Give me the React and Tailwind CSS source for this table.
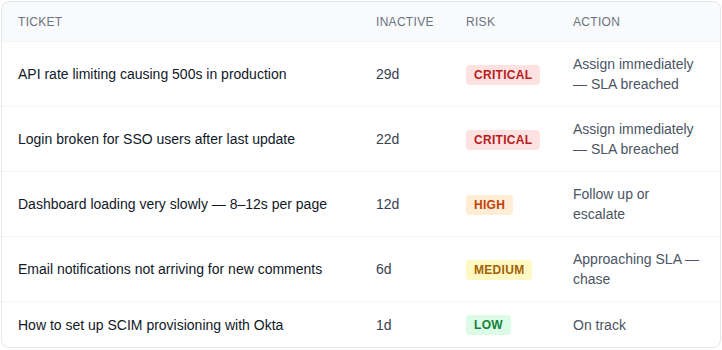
import React from "react";

const rows = [
  { t: "API rate limiting causing 500s in production", d: "29d", r: "CRITICAL", a: "Assign immediately — SLA breached" },
  { t: "Login broken for SSO users after last update", d: "22d", r: "CRITICAL", a: "Assign immediately — SLA breached" },
  { t: "Dashboard loading very slowly — 8–12s per page", d: "12d", r: "HIGH", a: "Follow up or escalate" },
  { t: "Email notifications not arriving for new comments", d: "6d", r: "MEDIUM", a: "Approaching SLA — chase" },
  { t: "How to set up SCIM provisioning with Okta", d: "1d", r: "LOW", a: "On track" },
];

const badge = {
  CRITICAL: "bg-[#fee2e2] text-[#b91c1c]",
  HIGH: "bg-[#ffedd5] text-[#c2410c]",
  MEDIUM: "bg-[#fef9c3] text-[#a16207]",
  LOW: "bg-[#dcfce7] text-[#15803d]",
};

export default function App() {
  return (
    <div className="p-px bg-white" style={{ fontFamily: '"Liberation Sans", Arial, sans-serif' }}>
      <div className="w-[720px] border border-[#e5e7eb] rounded-lg overflow-hidden bg-white">
        <table className="w-full table-fixed border-collapse text-sm">
          <colgroup>
            <col className="w-[358px]" />
            <col className="w-[90px]" />
            <col className="w-[107px]" />
            <col />
          </colgroup>
          <thead>
            <tr className="bg-[#f9fafb] border-b border-[#f3f4f6]">
              {["TICKET", "INACTIVE", "RISK", "ACTION"].map((h) => (
                <th key={h} className="px-4 pt-3 pb-[11px] text-left text-xs leading-4 font-normal tracking-wide text-[#6b7280]">
                  {h}
                </th>
              ))}
            </tr>
          </thead>
          <tbody>
            {rows.map((row, i) => (
              <tr key={i} className={i < rows.length - 1 ? "border-b border-[#f3f4f6]" : ""}>
                <td className="px-4 py-3 leading-5 text-[#111827] align-middle">{row.t}</td>
                <td className="px-4 py-3 leading-5 text-[#374151] align-middle">{row.d}</td>
                <td className="px-4 py-3 align-middle">
                  <span className={`inline-block rounded px-2 py-0.5 text-xs leading-4 font-bold tracking-wide ${badge[row.r]}`}>
                    {row.r}
                  </span>
                </td>
                <td className="px-4 py-3 leading-5 text-[#4b5563] align-middle">{row.a}</td>
              </tr>
            ))}
          </tbody>
        </table>
      </div>
    </div>
  );
}
